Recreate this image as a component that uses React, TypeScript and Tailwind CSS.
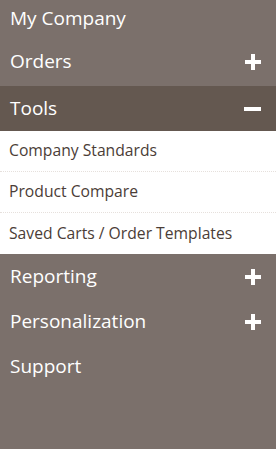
import React from "react";

const Plus = () => (
  <span className="relative block w-[16px] h-[16px]">
    <span className="absolute left-0 top-[6px] w-[16px] h-[4px] bg-white" />
    <span className="absolute left-[6px] top-0 w-[4px] h-[16px] bg-white" />
  </span>
);
const Minus = () => (
  <span className="relative block w-[17px] h-[16px]">
    <span className="absolute left-0 top-[6px] w-[17px] h-[4px] bg-white" />
  </span>
);

function MainRow({ label, icon, active, h = "h-[45px]" }: { label: string; icon?: "plus" | "minus"; active?: boolean; h?: string }) {
  return (
    <div className={`flex items-center justify-between pl-[10px] pr-[15px] ${h} ${active ? "bg-[#645850]" : ""}`}>
      <span className="text-white text-[19px] leading-none">{label}</span>
      {icon === "plus" && <Plus />}
      {icon === "minus" && <Minus />}
    </div>
  );
}

function SubRow({ label, last }: { label: string; last?: boolean }) {
  return (
    <div className={`flex items-center pl-[9px] h-[41px] ${last ? "" : "border-b border-dotted border-[#e6e0dc]"}`}>
      <span className="text-[#4b3d37] text-[15.7px] leading-none">{label}</span>
    </div>
  );
}

export default function App() {
  return (
    <div className="w-[276px] h-[449px] bg-[#7b706b] overflow-hidden" style={{ fontFamily: '"Open Sans", "Liberation Sans", sans-serif' }}>
      <MainRow label="My Company" h="h-[37px]" />
      <MainRow label="Orders" icon="plus" h="h-[49px]" />
      <MainRow label="Tools" icon="minus" active h="h-[45px]" />
      <div className="bg-white">
        <SubRow label="Company Standards" />
        <SubRow label="Product Compare" />
        <SubRow label="Saved Carts / Order Templates" last />
      </div>
      <MainRow label="Reporting" icon="plus" />
      <MainRow label="Personalization" icon="plus" />
      <MainRow label="Support" />
    </div>
  );
}
